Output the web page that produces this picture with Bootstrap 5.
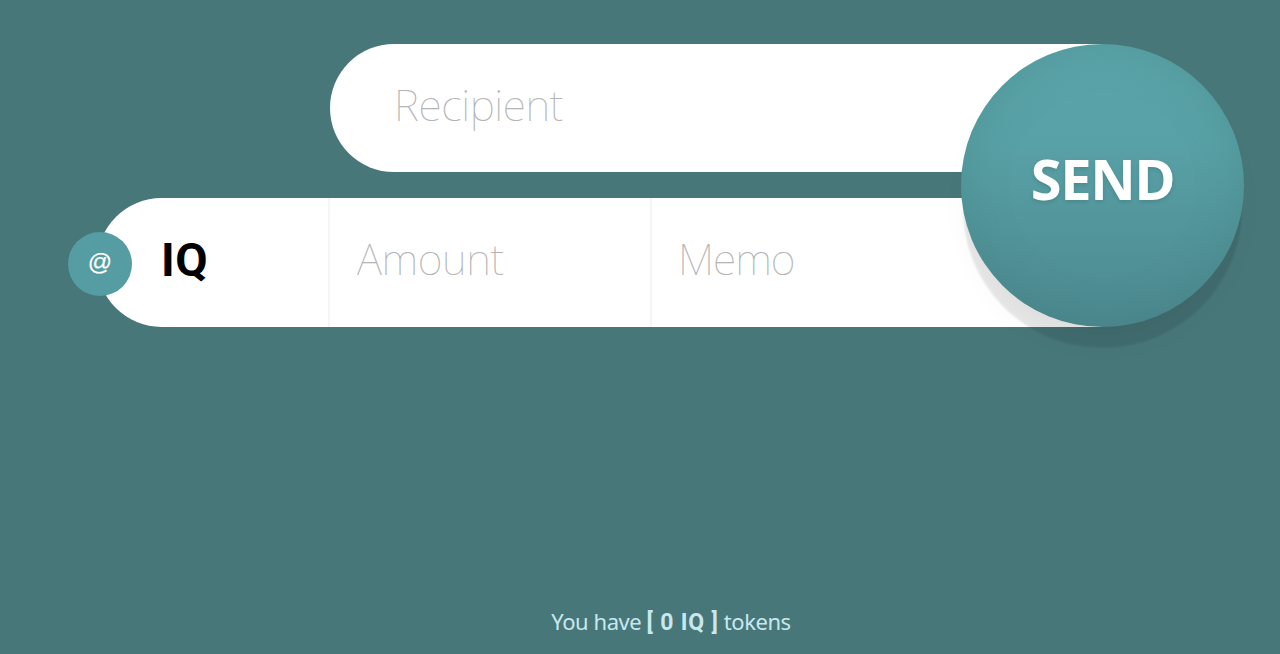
<!DOCTYPE html>
<html lang="en">
<head>
    <meta charset="UTF-8">
    <meta name="viewport" content="width=device-width, initial-scale=1.0">
    <title>Send IQ</title>

    <link href="https://cdn.jsdelivr.net/npm/bootstrap@5.3.0/dist/css/bootstrap.min.css" rel="stylesheet">

    <style>
        body {
            background-color: #48777a;
            font-family: "Noto Sans", "Open Sans", sans-serif;
            overflow: hidden;
        }

        .send-form {
            width: 1147px;
            margin-left: 97px;
            padding-top: 43.5px;
            gap: 26px;
        }

        .pill {
            height: 128.5px;
            background-color: #fff;
            border-radius: 65px 0 0 65px;
            margin-right: 142px;
        }

        .pill-recipient {
            margin-left: 233px;
        }

        .pill .form-control {
            border: 0;
            border-radius: 0;
            background: transparent;
            box-shadow: none;
            font-size: 43px;
            font-weight: 100;
            line-height: 1.2;
            letter-spacing: -0.4px;
            padding: 0 0 6px 26px;
            color: #000;
        }

        .pill .form-control::placeholder {
            color: #b4b4b4;
            opacity: 1;
        }

        .pill .recipient-input {
            padding-left: 64px;
        }

        .token-name {
            width: 231px;
            padding: 0 0 5px 64px;
            font-family: Roboto, sans-serif;
            font-size: 47px;
            font-weight: 700;
            letter-spacing: 0.5px;
            color: #000;
        }

        .amount-cell {
            width: 322px;
            border-left: 2px solid #f5f5f5;
        }

        .amount-cell .form-control {
            padding-left: 27px;
        }

        .memo-cell {
            border-left: 2px solid #f5f5f5;
        }

        .memo-cell .form-control {
            letter-spacing: -1px;
        }

        /* small round button over the left end of the lower pill */
        .btn-at {
            left: -29px;
            top: 34px;
            width: 64px;
            height: 64px;
            background-color: #559da3;
            color: #fff;
            font-family: "Liberation Sans", sans-serif;
            font-size: 24px;
            line-height: 1;
            -webkit-text-stroke: 0.2px #fff;
        }

        .btn-send {
            right: 0;
            top: 43.5px;
            width: 283px;
            height: 283px;
            padding: 0 0 15px;
            color: #fff;
            font-size: 56px;
            font-weight: 700;
            letter-spacing: -1.3px;
            background: linear-gradient(#5ba5aa 0%, #58a1a6 35%, #4c888f 100%);
            box-shadow: 0 23px 2px -2px rgba(0, 0, 0, .09), 0 20px 35px -12px rgba(0, 0, 0, .06), inset 0 0 45px rgba(60, 120, 115, .3);
            text-shadow: 0 2px 4px rgba(0, 0, 0, .12);
        }

        .balance {
            padding: 278px 0 0 62px;
            font-size: 22px;
            letter-spacing: -0.45px;
            color: #c9e7ee;
        }

        .balance b {
            font-family: Roboto, sans-serif;
            font-size: 23px;
            letter-spacing: 0.8px;
        }
    </style>
</head>
<body>

    <form class="send-form position-relative d-flex flex-column">
        <div class="pill pill-recipient d-flex align-items-stretch">
            <input type="text" class="form-control recipient-input" placeholder="Recipient">
        </div>

        <div class="pill position-relative d-flex align-items-stretch">
            <div class="token-name flex-shrink-0 d-flex align-items-center"><span>IQ</span></div>
            <div class="amount-cell flex-shrink-0 d-flex">
                <input type="text" class="form-control" placeholder="Amount">
            </div>
            <div class="memo-cell flex-grow-1 d-flex">
                <input type="text" class="form-control" placeholder="Memo">
            </div>
            <button type="button" class="btn-at border-0 rounded-circle position-absolute d-flex align-items-center justify-content-center p-0 pb-1"><span>@</span></button>
        </div>

        <button type="submit" class="btn-send border-0 rounded-circle position-absolute"><span>SEND</span></button>
    </form>

    <div class="balance text-center"><span>You have <b>[ 0 IQ ]</b> tokens</span></div>

    <script src="https://cdn.jsdelivr.net/npm/bootstrap@5.3.0/dist/js/bootstrap.bundle.min.js"></script>
</body>
</html>
